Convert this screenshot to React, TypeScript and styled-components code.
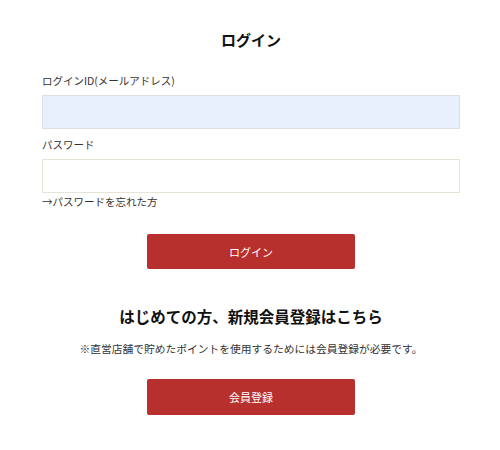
import React from "react";
import styled, { createGlobalStyle } from "styled-components";

const GlobalStyle = createGlobalStyle`
  html, body { margin: 0; padding: 0; background: #fff; }
  body { font-family: "Noto Sans CJK JP", "Noto Sans", sans-serif; color: #222; }
`;

const Page = styled.div`
  width: 500px;
  padding: 29px 40px 0 42px;
  box-sizing: border-box;
  display: flex;
  flex-direction: column;
`;

const Title = styled.h1`
  margin: 0;
  text-align: center;
  font-size: 15px;
  font-weight: 700;
  line-height: 22px;
  color: #111;
`;

const Form = styled.form`
  margin-top: 22px;
  display: flex;
  flex-direction: column;
`;

const Label = styled.label`
  display: block;
  font-size: 10.5px;
  line-height: 16px;
  color: #333;
`;

const Field = styled.input<{ $filled?: boolean }>`
  display: block;
  box-sizing: border-box;
  width: 418px;
  height: 34px;
  margin: 6px 0 8px;
  border: 1px solid ${(p) => (p.$filled ? "#dedfe2" : "#e6e4d6")};
  background: ${(p) => (p.$filled ? "#e8f0fd" : "#fff")};
  outline: none;
`;

const Forgot = styled.a`
  display: block;
  margin-top: -7px;
  font-size: 10.5px;
  line-height: 16px;
  color: #333;
  text-decoration: none;
`;

const Button = styled.button<{ $mt: number; $h: number }>`
  align-self: center;
  margin-top: ${(p) => p.$mt}px;
  width: 208px;
  height: ${(p) => p.$h}px;
  border: none;
  border-radius: 2px;
  background: #b8302d;
  color: #fff;
  font-family: "Noto Sans CJK JP", sans-serif;
  font-size: 11px;
  cursor: pointer;
`;

const SubTitle = styled.h2`
  margin: 36px 0 0;
  text-align: center;
  font-size: 15.5px;
  font-weight: 700;
  line-height: 22px;
  color: #111;
`;

const Note = styled.p`
  margin: 14px 0 0;
  text-align: center;
  font-size: 10.75px;
  line-height: 16px;
  color: #333;
`;

export default function App() {
  return (
    <>
      <GlobalStyle />
      <Page>
        <Title>ログイン</Title>
        <Form onSubmit={(e) => e.preventDefault()}>
          <Label>ログインID(メールアドレス)</Label>
          <Field $filled type="text" />
          <Label>パスワード</Label>
          <Field type="password" />
          <Forgot href="#">→パスワードを忘れた方</Forgot>
          <Button type="submit" $mt={24} $h={35}>ログイン</Button>
        </Form>
        <SubTitle>はじめての方、新規会員登録はこちら</SubTitle>
        <Note>※直営店舗で貯めたポイントを使用するためには会員登録が必要です。</Note>
        <Button type="button" $mt={22} $h={36}>会員登録</Button>
      </Page>
    </>
  );
}
